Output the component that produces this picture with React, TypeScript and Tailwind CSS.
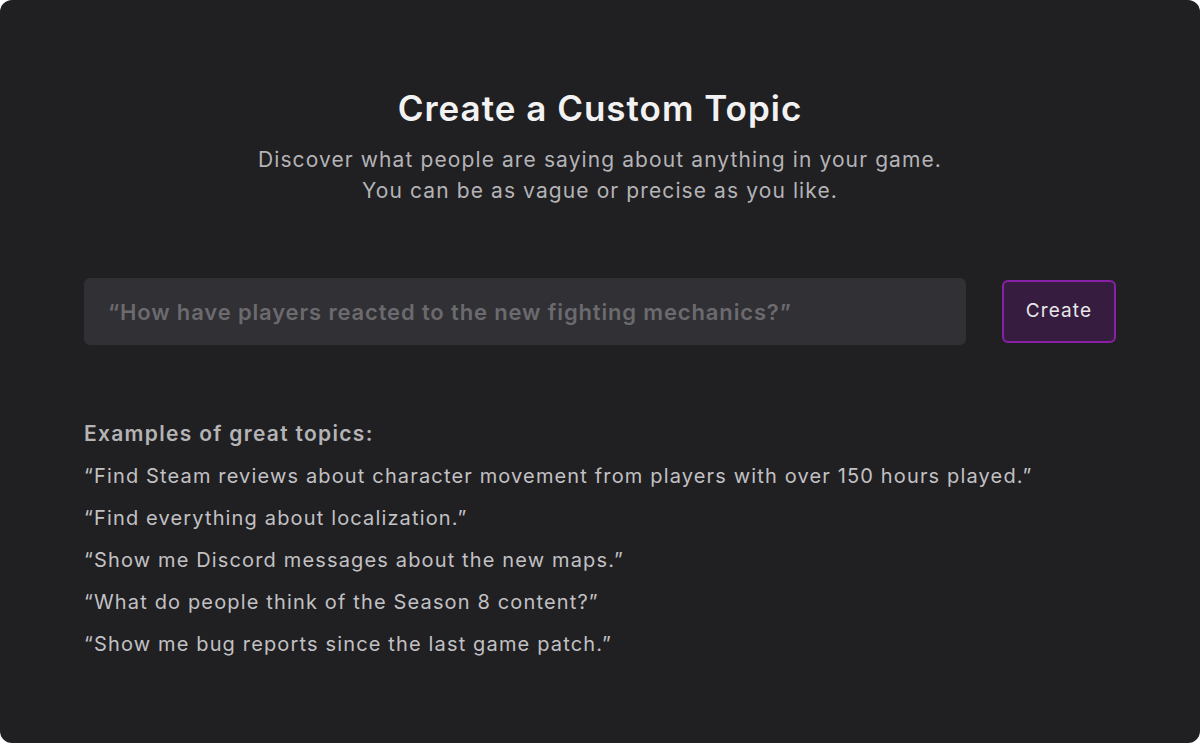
import React, { useState } from "react";

const examples = [
  "“Find Steam reviews about character movement from players with over 150 hours played.”",
  "“Find everything about localization.”",
  "“Show me Discord messages about the new maps.”",
  "“What do people think of the Season 8 content?”",
  "“Show me bug reports since the last game patch.”",
];

export default function App() {
  const [topic, setTopic] = useState("");

  return (
    <div className="w-[1200px] h-[743px] bg-white" style={{ fontFamily: "Inter, 'Noto Sans', sans-serif" }}>
      <div className="h-full w-full rounded-[12px] bg-[#201f22] px-[84px] pt-[86px]">
        <h1 className="text-center text-[35px] font-semibold leading-[44px] text-[#f2f2f2] tracking-[1px]">
          Create a Custom Topic
        </h1>
        <p className="mt-[14px] text-center text-[21px] leading-[31px] tracking-[1.1px] text-[#b4b3b6]">
          Discover what people are saying about anything in your game.
          <br />
          You can be as vague or precise as you like.
        </p>

        <div className="mt-[72px] flex items-center gap-[36px]">
          <input
            value={topic}
            onChange={(e) => setTopic(e.target.value)}
            placeholder="“How have players reacted to the new fighting mechanics?”"
            className="h-[67px] flex-1 rounded-[6px] bg-[#313034] px-[24px] text-[22px] font-semibold tracking-[0.85px] text-[#d8d8d8] outline-none placeholder:text-[#6b6a6e]"
          />
          <button className="h-[63px] w-[114px] rounded-[6px] border-2 border-[#8a1fa8] bg-[#361c3e] text-[19px] tracking-[1.1px] text-[#e8e6ea]">
            Create
          </button>
        </div>

        <div className="mt-[75px]">
          <h2 className="text-[21px] font-semibold leading-[28px] tracking-[1.3px] text-[#b4b3b6]">
            Examples of great topics:
          </h2>
          <ul className="mt-[14px] flex flex-col gap-[14px]">
            {examples.map((ex) => (
              <li key={ex} className="text-[20px] leading-[28px] tracking-[1.15px] text-[#c2c1c4]">
                {ex}
              </li>
            ))}
          </ul>
        </div>
      </div>
    </div>
  );
}
